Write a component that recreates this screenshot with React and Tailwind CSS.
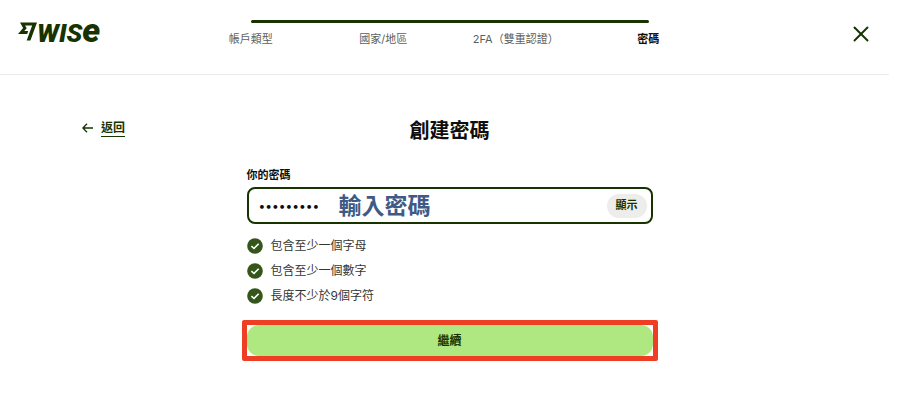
import { useState } from 'react'
import { X } from 'lucide-react'

const STEPS = ['帳戶類型', '國家/地區', '2FA（雙重認證）', '密碼']
const RULES = ['包含至少一個字母', '包含至少一個數字', '長度不少於9個字符']

function Logo() {
  return (
    <a href="#" aria-label="Wise" className="flex items-center text-[#163300]">
      <svg width="19" height="19" viewBox="0 0 24 24" fill="currentColor">
        <path d="M6.488 7.469 0 15.05h11.585l1.301-3.576H7.922l3.033-3.507.01-.092L8.993 4.48h8.873l-6.878 18.925h4.706L24 .595H2.543l3.945 6.874Z" />
      </svg>
      <span className="flex items-baseline font-['Roboto',sans-serif] text-[26px] leading-8 font-black italic">
        WIS<span className="text-[34px] leading-8">e</span>
      </span>
    </a>
  )
}

function Stepper() {
  return (
    <nav className="pt-5">
      <div className="mx-[66px] h-[3px] rounded-full bg-[#163300]" />
      <ol className="mt-2 grid grid-cols-4 text-center text-[11px] leading-4 text-[#5d5f5b]">
        {STEPS.map((step, idx) => (
          <li
            key={step}
            className={idx === STEPS.length - 1 ? 'font-bold whitespace-nowrap text-[#0e0f0c]' : 'whitespace-nowrap'}
          >
            {step}
          </li>
        ))}
      </ol>
    </nav>
  )
}

function RuleItem({ text }) {
  return (
    <li className="flex items-center gap-2">
      <svg width="16" height="16" viewBox="0 0 16 16">
        <circle cx="8" cy="8" r="7.8" fill="#34561a" />
        <path d="M4.4 8.2L7 10.5L11.7 5.8" fill="none" stroke="white" strokeWidth="1.6" />
      </svg>
      {text}
    </li>
  )
}

export default function App() {
  const [password, setPassword] = useState('abcdefg12')
  const [visible, setVisible] = useState(false)

  return (
    <div className="mr-[18px] bg-white font-['Inter','Noto_Sans_CJK_TC',sans-serif] text-[#0e0f0c]">
      <header className="grid h-[75px] grid-cols-[1fr_minmax(0,530px)_1fr] border-b border-[#ececec] pr-2 pl-[18px]">
        <div className="pt-[14px]">
          <Logo />
        </div>
        <Stepper />
        <div className="flex justify-end pt-[14px]">
          <button type="button" aria-label="關閉" className="flex size-10 items-center justify-center text-[#163300]">
            <X size={26} strokeWidth={1.75} />
          </button>
        </div>
      </header>

      <main className="grid grid-cols-[1fr_minmax(0,406px)_1fr] pt-10 pr-[72px] pl-[82px]">
        <div>
          <a href="#" className="inline-flex items-center gap-2 text-xs leading-6 font-bold text-[#163300]">
            <svg width="11" height="10" viewBox="0 0 11 10" fill="none" stroke="currentColor" strokeWidth="1.3">
              <path d="M5 0.8L0.9 5L5 9.2M1 5H11" />
            </svg>
            <span className="border-b border-[#163300] leading-4">返回</span>
          </a>
        </div>

        <form onSubmit={(e) => e.preventDefault()}>
          <h1 className="text-center text-xl leading-8 font-bold">創建密碼</h1>

          <label htmlFor="password" className="mt-5 block text-[11px] leading-4 font-bold">
            你的密碼
          </label>
          <div className="relative mt-1 flex h-[37px] items-center rounded-lg border-2 border-[#163300] pr-1 pl-[10px]">
            <input
              id="password"
              type={visible ? 'text' : 'password'}
              value={password}
              onChange={(e) => setPassword(e.target.value)}
              className="min-w-0 flex-1 text-xs outline-none"
            />
            <button
              type="button"
              onClick={() => setVisible(!visible)}
              className="h-6 rounded-full bg-[#ededeb] px-[9px] text-[11px] font-bold text-[#163300]"
            >
              顯示
            </button>
            {/* Hint over the field */}
            <span className="pointer-events-none absolute left-[90px] text-[23px] leading-8 font-bold text-[#3f5a86]">
              輸入密碼
            </span>
          </div>

          <ul className="mt-[14px] flex flex-col gap-[9px] text-xs text-[#353733]">
            {RULES.map((rule) => (
              <RuleItem key={rule} text={rule} />
            ))}
          </ul>

          {/* Highlighted action */}
          <div className="-mx-[5px] mt-4 rounded-xs border-5 border-[#ee3f24]">
            <button
              type="submit"
              className="block h-[31px] w-full rounded-xl bg-[#afe780] text-xs font-bold text-[#163300]"
            >
              繼續
            </button>
          </div>
        </form>
      </main>
    </div>
  )
}
